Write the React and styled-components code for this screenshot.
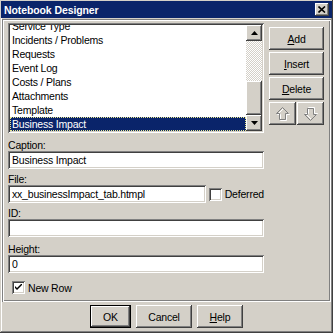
import React from 'react';
import styled, { createGlobalStyle } from 'styled-components';

const face = '#d4d0c8';
const raised = `inset -1px -1px #404040, inset 1px 1px #ffffff, inset -2px -2px #808080, inset 2px 2px ${face}`;
const sunken = `inset 1px 1px #808080, inset -1px -1px #ffffff, inset 2px 2px #404040, inset -2px -2px ${face}`;

const GlobalStyle = createGlobalStyle`
  html, body {
    margin: 0;
    padding: 0;
    background: ${face};
  }
  body {
    font-family: "Liberation Sans", Arial, sans-serif;
    font-size: 10.5px;
    color: #000;
  }
`;

// window frame
const Window = styled.div`
  width: 333px;
  height: 333px;
  box-sizing: border-box;
  padding: 1px;
  background: ${face};
  box-shadow: inset -1px -1px #404040, inset 1px 1px ${face}, inset -2px -2px #808080, inset 2px 2px #ffffff;
  display: flex;
  flex-direction: column;
`;

const TitleBar = styled.div`
  height: 17px;
  background: #0a246a;
  display: flex;
  align-items: center;
  justify-content: space-between;
  padding: 0 3px 0 3px;
`;

const Title = styled.span`
  color: #fff;
  font-weight: bold;
  font-size: 10.5px;
  letter-spacing: -0.1px;
`;

const CloseButton = styled.div`
  width: 14px;
  height: 13px;
  background: ${face};
  box-shadow: ${raised};
  display: flex;
  align-items: center;
  justify-content: center;
`;

const Panel = styled.div`
  margin: 1px 1px 0 1px;
  padding: 4px 6px 8px 6px;
  box-shadow: inset 1px 1px #808080, inset -1px -1px #ffffff, inset 2px 2px #ffffff, inset -2px -2px #808080;
  display: flex;
  gap: 5px;
  align-items: flex-start;
`;

const LeftCol = styled.div`
  width: 256px;
  display: flex;
  flex-direction: column;
`;

const RightCol = styled.div`
  margin-top: 4px;
  width: 55px;
  display: flex;
  flex-direction: column;
  gap: 2px;
`;

// list box
const ListBox = styled.div`
  height: 110px;
  box-sizing: border-box;
  padding: 2px;
  background: #fff;
  box-shadow: ${sunken};
  display: flex;
`;

const ListItems = styled.div`
  flex: 1;
  overflow: hidden;
  display: flex;
  flex-direction: column;
  justify-content: flex-end;
`;

const ListRow = styled.div`
  flex: none;
  height: 14px;
  line-height: 14px;
  padding-left: 2px;
  white-space: nowrap;
  letter-spacing: -0.2px;
  background: ${p => (p.$selected ? '#0a246a' : 'transparent')};
  color: ${p => (p.$selected ? '#fff' : '#000')};
  outline: ${p => (p.$selected ? '1px dotted #e8e890' : 'none')};
  outline-offset: -1px;
`;

const ScrollBar = styled.div`
  width: 16px;
  display: flex;
  flex-direction: column;
`;

const ScrollArrow = styled.div`
  height: 16px;
  background: ${face};
  box-shadow: ${raised};
  display: flex;
  align-items: center;
  justify-content: center;
`;

const Track = styled.div`
  flex: 1;
  display: flex;
  flex-direction: column;
  background: repeating-conic-gradient(#ffffff 0 25%, ${face} 0 50%) 0 0 / 2px 2px;
`;

const Thumb = styled.div`
  margin-top: auto;
  height: 34px;
  background: ${face};
  box-shadow: ${raised};
`;

// form fields
const Field = styled.div`
  margin-top: ${p => p.$gap}px;
  display: flex;
  flex-direction: column;
`;

const Label = styled.div`
  height: 12px;
  line-height: 12px;
  letter-spacing: -0.2px;
`;

const FieldRow = styled.div`
  display: flex;
  align-items: center;
`;

const Input = styled.div`
  width: ${p => p.$width || 256}px;
  height: 18px;
  box-sizing: border-box;
  padding: 0 4px;
  background: #fff;
  box-shadow: ${sunken};
  line-height: 18px;
  white-space: nowrap;
  overflow: hidden;
  letter-spacing: -0.2px;
`;

const CheckLabel = styled.label`
  display: flex;
  align-items: center;
  margin-left: ${p => p.$indent}px;
  margin-top: ${p => p.$top || 0}px;
  letter-spacing: -0.2px;
`;

const CheckBox = styled.span`
  width: 13px;
  height: 13px;
  box-sizing: border-box;
  background: #fff;
  box-shadow: ${sunken};
  display: flex;
  align-items: center;
  justify-content: center;
  margin-right: 3px;
`;

// buttons
const Button = styled.div`
  height: ${p => p.$h || 23}px;
  width: ${p => (p.$w ? `${p.$w}px` : 'auto')};
  flex: ${p => (p.$grow ? 1 : 'none')};
  box-sizing: border-box;
  background: ${face};
  box-shadow: ${p => (p.$default ? `inset 0 0 0 1px #000, inset -2px -2px #404040, inset 2px 2px #ffffff, inset -3px -3px #808080` : raised)};
  display: flex;
  align-items: center;
  justify-content: center;
  letter-spacing: -0.2px;

  u { text-decoration: underline; }
`;

const ArrowRow = styled.div`
  display: flex;
  gap: 1px;
`;

const Footer = styled.div`
  margin-top: 3px;
  display: flex;
  justify-content: center;
  gap: 5px;
`;

const Tri = ({ down }) => (
  <svg width="7" height="4" viewBox="0 0 7 4">
    <path d={down ? 'M0 0H7L3.5 4Z' : 'M0 4H7L3.5 0Z'} fill="#000" />
  </svg>
);

const HollowArrow = ({ down }) => {
  const d = 'M6.5 0.5 L12.5 6.5 L9.5 6.5 L9.5 12.5 L3.5 12.5 L3.5 6.5 L0.5 6.5 Z';
  return (
    <svg width="14" height="14" viewBox="0 0 14 14" style={{ transform: down ? 'scaleY(-1)' : 'none' }}>
      <path d={d} fill="none" stroke="#fff" transform="translate(1 1)" />
      <path d={d} fill="none" stroke="#808080" />
    </svg>
  );
};

const items = [
  'Service Type',
  'Incidents / Problems',
  'Requests',
  'Event Log',
  'Costs / Plans',
  'Attachments',
  'Template',
  'Business Impact',
];

export default function App() {
  return (
    <>
      <GlobalStyle />
      <Window>
        <TitleBar>
          <Title>Notebook Designer</Title>
          <CloseButton>
            <svg width="8" height="7" viewBox="0 0 8 7">
              <path d="M0.5 0.5 L7 6.5 M7 0.5 L0.5 6.5" stroke="#000" strokeWidth="1.6" />
            </svg>
          </CloseButton>
        </TitleBar>

        <Panel>
          <LeftCol>
            <ListBox>
              <ListItems>
                {items.map(it => (
                  <ListRow key={it} $selected={it === 'Business Impact'}>{it}</ListRow>
                ))}
              </ListItems>
              <ScrollBar>
                <ScrollArrow><Tri /></ScrollArrow>
                <Track><Thumb /></Track>
                <ScrollArrow><Tri down /></ScrollArrow>
              </ScrollBar>
            </ListBox>

            <Field $gap={6}>
              <Label>Caption:</Label>
              <Input>Business Impact</Input>
            </Field>
            <Field $gap={4}>
              <Label>File:</Label>
              <FieldRow>
                <Input $width={199}>xx_businessImpact_tab.htmpl</Input>
                <CheckLabel $indent={3}>
                  <CheckBox />
                  Deferred
                </CheckLabel>
              </FieldRow>
            </Field>
            <Field $gap={4}>
              <Label>ID:</Label>
              <Input />
            </Field>
            <Field $gap={6}>
              <Label>Height:</Label>
              <Input>0</Input>
            </Field>
            <CheckLabel $indent={4} $top={8}>
              <CheckBox>
                <svg width="7" height="7" viewBox="0 0 7 7">
                  <path d="M0 2 L0 4 L2 6 L7 1 L7 -1 L2 4 Z" fill="#000" />
                </svg>
              </CheckBox>
              New Row
            </CheckLabel>
          </LeftCol>

          <RightCol>
            <Button><span><u>A</u>dd</span></Button>
            <Button><span><u>I</u>nsert</span></Button>
            <Button><span><u>D</u>elete</span></Button>
            <ArrowRow>
              <Button $grow><HollowArrow /></Button>
              <Button $grow><HollowArrow down /></Button>
            </ArrowRow>
          </RightCol>
        </Panel>

        <Footer>
          <Button $w={41} $default>OK</Button>
          <Button $w={56}>Cancel</Button>
          <Button $w={46}><span><u>H</u>elp</span></Button>
        </Footer>
      </Window>
    </>
  );
}
